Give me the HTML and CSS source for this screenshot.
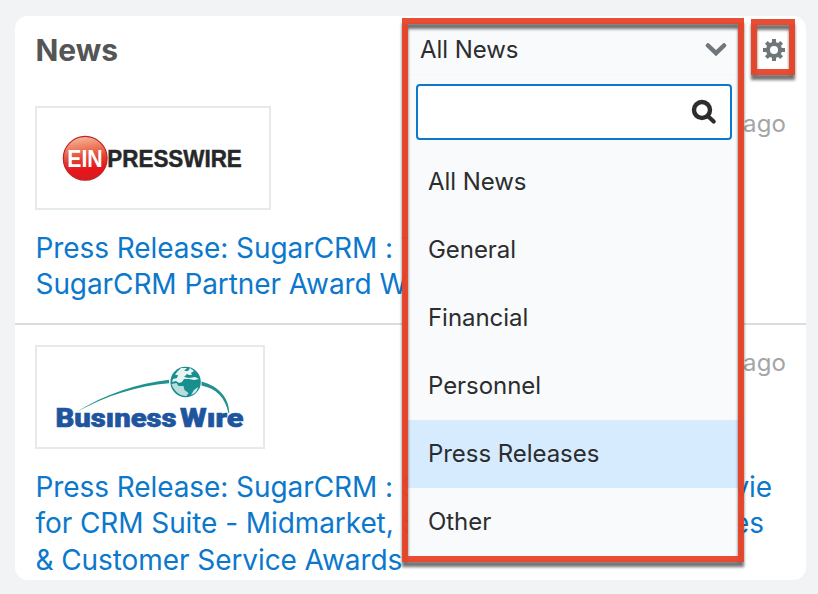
FILE: index.html
```html
<!DOCTYPE html>
<html lang="en">
<head>
<meta charset="utf-8">
<title>News</title>
<link rel="stylesheet" href="styles.css">
</head>
<body>
<main class="card">
  <header class="card-header">
    <h1 class="card-title">News</h1>
    <button class="settings" aria-label="Settings">
      <svg width="22" height="22" viewBox="-11 -11 22 22">
        <g fill="#6f777b">
          <rect x="-2" y="-11" width="4" height="22"/><rect x="-11" y="-2" width="22" height="4"/>
          <g transform="rotate(45)"><rect x="-2" y="-10.8" width="4" height="21.6"/><rect x="-10.8" y="-2" width="21.6" height="4"/></g>
          <circle r="8"/>
        </g>
        <circle r="4" fill="#fff"/>
      </svg>
    </button>
  </header>

  <article class="story">
    <div class="story-top">
      <div class="logo logo-ein">
        <svg width="232" height="100" viewBox="37 108 232 100">
          <defs>
            <linearGradient id="ball" x1=".4" y1="0" x2=".55" y2="1">
              <stop offset="0" stop-color="#f6b79d"/><stop offset=".25" stop-color="#ee7f62"/>
              <stop offset=".55" stop-color="#e23a2d"/><stop offset=".75" stop-color="#e8151d"/><stop offset="1" stop-color="#d91a20"/>
            </linearGradient>
          </defs>
          <circle cx="85.2" cy="158.3" r="21.9" fill="url(#ball)" stroke="#bd2428" stroke-width="1.2"/>
          <text class="ein" x="67.3" y="167" textLength="35.4" lengthAdjust="spacingAndGlyphs">EIN</text>
          <text class="presswire" x="107.3" y="166.700" textLength="134.5" lengthAdjust="spacingAndGlyphs">PRESSWIRE</text>
        </svg>
      </div>
      <time class="age">ago</time>
    </div>
    <h2 class="story-title">
      <span class="line"><span>Press Release: SugarCRM : T</span></span>
      <span class="line"><span>SugarCRM Partner Award W</span></span>
    </h2>
  </article>

  <article class="story">
    <div class="story-top">
      <div class="logo logo-bw">
        <svg width="226" height="100" viewBox="37 347 226 100">
          <path d="M75.500 412.500C105 394 138 383.500 169 379.800V383.200C137 386 107 395 75.500 412.500Z" fill="#23918f"/>
          <path d="M201.500 381.500C218 386 229 397 229.300 413H228.400C225 397 216 388.500 201.500 385.500Z" fill="#23918f"/>
          <circle cx="185.600" cy="382" r="15.200" fill="#168f8e"/>
          <g fill="#fff">
            <path d="M177 372l4-4 6 0-3 3 4 0 2-3 4 3-3 2 1 2-3 0-2-1-3 3 5 1 6-1 4 2-5 1-5-1-5 0-2 3-3 1-3-2-4 1 1-3 4-1 1-3-3 0Z" opacity=".9"/>
            <path d="M171.500 384l5-1 2 3 5 0 1 4 4 3-2 3q-6 0-10-4-4-4-5-8Z" opacity=".7"/>
            <path d="M191 395l3-5 4-3q0 5-7 8Z" opacity=".8"/>
          </g>
          <text class="bw" x="55.500" y="426.500" textLength="121" lengthAdjust="spacingAndGlyphs">Busıness</text>
          <text class="bw" x="180" y="426.500" textLength="63.500" lengthAdjust="spacingAndGlyphs">Wıre</text>
        </svg>
      </div>
      <time class="age">ago</time>
    </div>
    <h2 class="story-title">
      <span class="line"><span>Press Release: SugarCRM : S</span><span class="end-a">vie</span></span>
      <span class="line"><span>for CRM Suite - Midmarket, S</span><span class="end-b">es</span></span>
      <span class="line"><span>&amp; Customer Service Awards</span></span>
    </h2>
  </article>
</main>

<section class="dropdown">
  <div class="selected">
    <span>All News</span>
    <svg width="22" height="16" viewBox="0 0 22 16"><path d="M3 4.500l8 7.700 8-7.700" fill="none" stroke="#6f777b" stroke-width="4.500" stroke-linecap="round"/></svg>
  </div>
  <div class="search">
    <svg width="26" height="26" viewBox="0 0 26 26" fill="none" stroke="#2b2d2e"><circle cx="11" cy="11" r="8" stroke-width="4.400"/><path d="M17 17.200l5.700 5.300" stroke-width="4.200" stroke-linecap="round"/></svg>
  </div>
  <ul class="options">
    <li>All News</li>
    <li>General</li>
    <li>Financial</li>
    <li>Personnel</li>
    <li class="active">Press Releases</li>
    <li>Other</li>
  </ul>
</section>
<div class="frame frame-menu"></div>
<div class="frame frame-gear"></div>
</body>
</html>
```
FILE: styles.css
```css
* { box-sizing: border-box; }
body {
  margin: 0;
  height: 594px;
  padding: 16px 12px 14px 15px;
  background: #f1f3f5;
  font-family: Inter, "Liberation Sans", sans-serif;
  overflow: hidden;
}
.card {
  height: 564px;
  background: #fff;
  border-radius: 13px;
  overflow: hidden;
}
.card-header {
  height: 68px;
  padding: 0 21px 0 20.5px;
  display: flex;
  align-items: center;
  justify-content: space-between;
}
.card-title {
  margin: 0;
  font-size: 30px;
  font-weight: 700;
  line-height: 36px;
  color: #555;
}
.settings {
  display: flex;
  padding: 0;
  border: 0;
  background: none;
}
.story {
  height: 239px;
  padding: 22px 20px 0;
}
.story:first-of-type { border-bottom: 2px solid #dcdcdc; height: 241px; }
.story + .story { padding-top: 20px; }
.story-top {
  display: flex;
  justify-content: space-between;
  align-items: flex-start;
}
.logo {
  display: flex;
  border: 2px solid #e5eaed;
}
.logo svg { display: block; }
.ein, .presswire {
  font-family: "Liberation Sans", sans-serif;
  font-weight: 700;
  font-size: 24px;
}
.ein { fill: #fff; }
.presswire {
  fill: #252729;
  stroke: #252729;
  stroke-width: .5px;
}
.bw {
  font-family: Roboto, sans-serif;
  font-weight: 900;
  font-size: 25.5px;
  fill: #1d559e;
  stroke: #1d559e;
  stroke-width: .6px;
}
.age {
  font-size: 24px;
  line-height: 36px;
  letter-spacing: .1px;
  color: #a5a5a5;
}
.story-title {
  margin: 20px 0 0;
  padding-left: .5px;
  font-size: 28px;
  font-weight: 400;
  line-height: 36.4px;
  letter-spacing: -.08px;
  color: #0b78cc;
}
.line {
  display: flex;
  justify-content: space-between;
  white-space: nowrap;
}
.end-a { margin-right: 14px; }
.end-b { margin-right: 22px; }
.dropdown {
  position: absolute;
  left: 408px;
  top: 24px;
  width: 330px;
  height: 532px;
  background: #f9fafc;
  color: #2b2d2e;
  font-size: 24px;
  letter-spacing: -.05px;
}
.selected {
  height: 51px;
  padding: 0 11px 0 12px;
  border-bottom: 1px solid #f6f7f8;
  display: flex;
  align-items: center;
  justify-content: space-between;
}
.search {
  height: 56px;
  margin: 9px 6px 0 8px;
  padding-right: 13px;
  border: 2px solid #0b78cc;
  border-radius: 4px;
  background: #fff;
  display: flex;
  align-items: center;
  justify-content: flex-end;
}
.options {
  list-style: none;
  margin: 8px 0 0;
  padding: 0;
}
.options li {
  height: 68px;
  padding-left: 20px;
  line-height: 68px;
}
.options .active { background: #d7ebff; }
.frame {
  position: absolute;
  border: 6px solid rgba(232, 68, 41, .95);
  filter: drop-shadow(0 5px 1.5px rgba(0, 0, 0, .58));
  pointer-events: none;
}
.frame-menu { left: 402px; top: 18px; width: 342px; height: 544px; }
.frame-gear { left: 751px; top: 19px; width: 44px; height: 56px; }
```
